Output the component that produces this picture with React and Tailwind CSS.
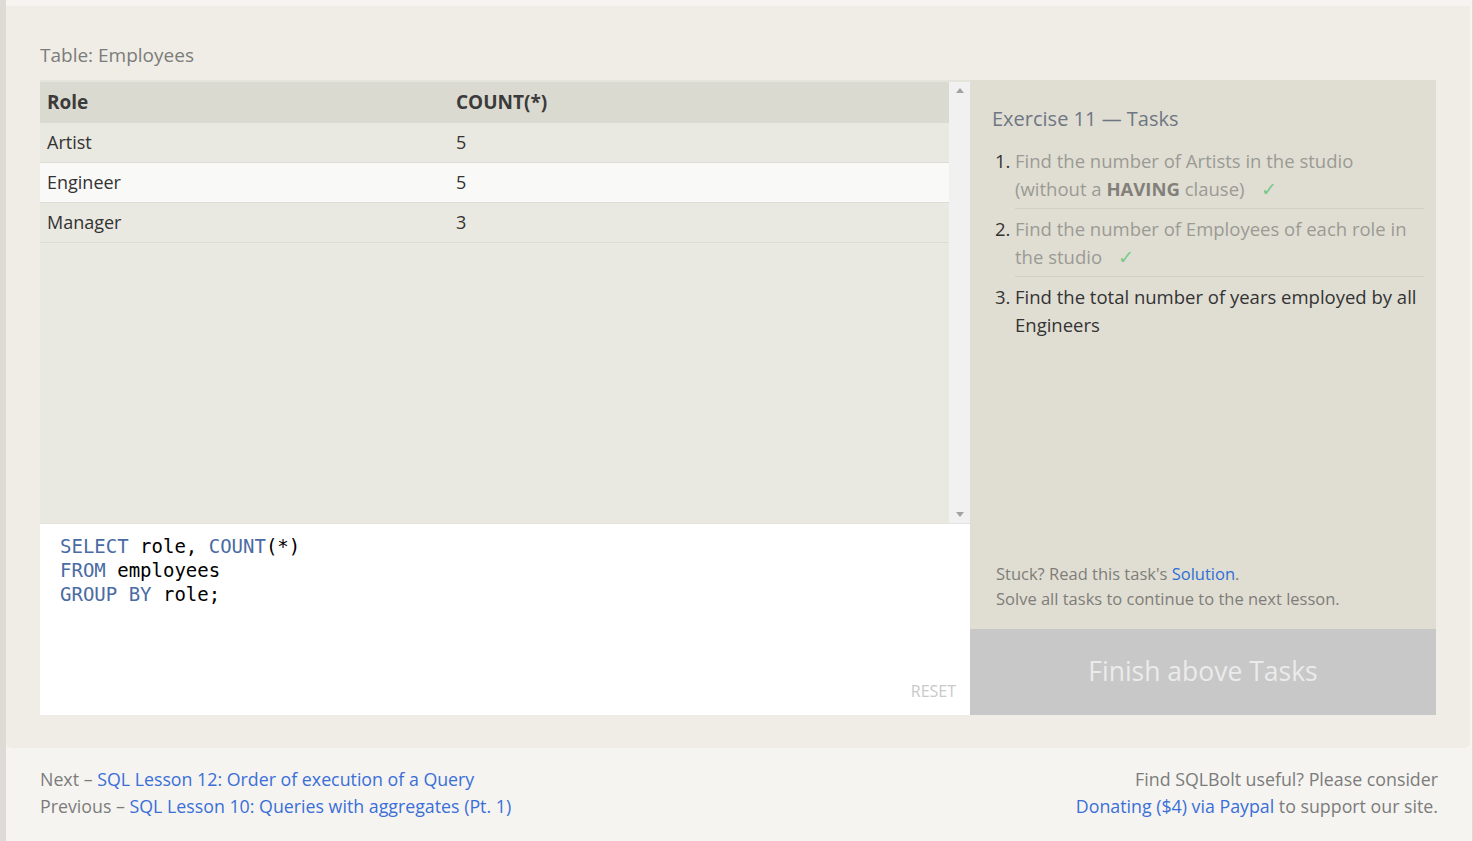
import React from 'react';

const rows = [
  { role: 'Artist', count: 5, bg: 'bg-[#e9e8e1]' },
  { role: 'Engineer', count: 5, bg: 'bg-[#f9f9f8]' },
  { role: 'Manager', count: 3, bg: 'bg-[#e9e8e1]' },
];

const Check = () => <span className="inline-block ml-4 text-[#79c98a]">✓</span>;

const App = () => {
  return (
    <div className="h-[841px] w-full flex bg-[#dedbd7] font-['Open_Sans',sans-serif] overflow-hidden">
      <div className="w-[6px] shrink-0" />
      <div className="flex-1 bg-[#f5f4f0] flex flex-col pt-[6px]">
        {/* lesson exercise panel */}
        <div className="bg-[#efede6] rounded-b-[6px] px-[34px] pt-[36px] pb-[33px] mr-[2px]">
          <div className="text-[19px] text-[#7c7c7c] leading-[26px] mb-[12px]">Table: Employees</div>
          <div className="flex h-[635px]">
            <div className="flex flex-col w-[930px] shrink-0">
              <div className="flex h-[443px] border-t-2 border-[#e4e3dc]">
                <div className="flex-1 bg-[#e9e8e1] flex flex-col">
                  <div className="flex h-[41px] items-center bg-[#dbdad0] font-bold text-[19px] text-[#3b3b3b]">
                    <div className="w-[416px] pl-[7px]">Role</div>
                    <div>COUNT(*)</div>
                  </div>
                  {rows.map((r) => (
                    <div key={r.role} className={`flex h-[40px] items-center text-[18px] text-[#333] border-b border-[#dddcd5] ${r.bg}`}>
                      <div className="w-[416px] pl-[7px]">{r.role}</div>
                      <div>{r.count}</div>
                    </div>
                  ))}
                </div>
                <div className="w-[21px] bg-[#f1f1f1] flex flex-col items-center justify-between py-[6px]">
                  <span className="w-0 h-0 border-l-[4px] border-r-[4px] border-b-[5px] border-l-transparent border-r-transparent border-b-[#a3a3a3]" />
                  <span className="w-0 h-0 border-l-[4px] border-r-[4px] border-t-[5px] border-l-transparent border-r-transparent border-t-[#a3a3a3]" />
                </div>
              </div>
              <div className="flex-1 bg-white border-t border-[#e4e3dc] relative pl-[20px] pt-[10px] font-['DejaVu_Sans_Mono',monospace] text-[19px] leading-[24px] text-black">
                <div><span className="text-[#4a6ba3]">SELECT</span> role, <span className="text-[#4a6ba3]">COUNT</span>(*)</div>
                <div><span className="text-[#4a6ba3]">FROM</span> employees</div>
                <div><span className="text-[#4a6ba3]">GROUP BY</span> role;</div>
                <div className="absolute right-[14px] bottom-[12px] font-['Open_Sans',sans-serif] text-[16px] text-[#c9c9c9]">RESET</div>
              </div>
            </div>
            <div className="flex-1 flex flex-col w-[466px]">
              <div className="flex-1 bg-[#e0ded3] pl-[22px] pr-[12px] pt-[25px] pb-[18px] flex flex-col">
                <div className="text-[20px] text-[#6f7683] leading-[28px] mb-[14px]">Exercise 11 — Tasks</div>
                <ol className="text-[18.5px] leading-[28px]">
                  <li className="flex">
                    <span className="w-[23px] pl-[3px] text-[#333]">1.</span>
                    <span className="flex-1 pb-[5px] border-b border-[#d2d0c6] text-[#9b9a94]">
                      Find the number of Artists in the studio (without a <b className="text-[#828079]">HAVING</b> clause)<Check />
                    </span>
                  </li>
                  <li className="flex pt-[6px]">
                    <span className="w-[23px] pl-[3px] text-[#333]">2.</span>
                    <span className="flex-1 pb-[5px] border-b border-[#d2d0c6] text-[#9b9a94]">
                      Find the number of Employees of each role in the studio<Check />
                    </span>
                  </li>
                  <li className="flex pt-[6px]">
                    <span className="w-[23px] pl-[3px] text-[#333]">3.</span>
                    <span className="flex-1 text-[#333]">Find the total number of years employed by all Engineers</span>
                  </li>
                </ol>
                <div className="mt-auto text-[16.5px] leading-[25px] text-[#7f7d78] pl-[4px]">
                  <div>Stuck? Read this task's <span className="text-[#2f6fd6]">Solution</span>.</div>
                  <div>Solve all tasks to continue to the next lesson.</div>
                </div>
              </div>
              <div className="h-[86px] bg-[#c8c8c8] flex items-center justify-center text-[26.5px] text-[#ebebeb]">
                Finish above Tasks
              </div>
            </div>
          </div>
        </div>
        {/* footer nav */}
        <div className="flex justify-between px-[34px] pt-[18px] text-[17.8px] leading-[27px] text-[#7c7c7c]">
          <div>
            <div>Next – <span className="text-[#3a6fd8]">SQL Lesson 12: Order of execution of a Query</span></div>
            <div>Previous – <span className="text-[#3a6fd8]">SQL Lesson 10: Queries with aggregates (Pt. 1)</span></div>
          </div>
          <div className="text-right">
            <div>Find SQLBolt useful? Please consider</div>
            <div><span className="text-[#3a6fd8]">Donating ($4) via Paypal</span> to support our site.</div>
          </div>
        </div>
      </div>
      <div className="w-[4px] shrink-0" />
    </div>
  );
};

export default App;
